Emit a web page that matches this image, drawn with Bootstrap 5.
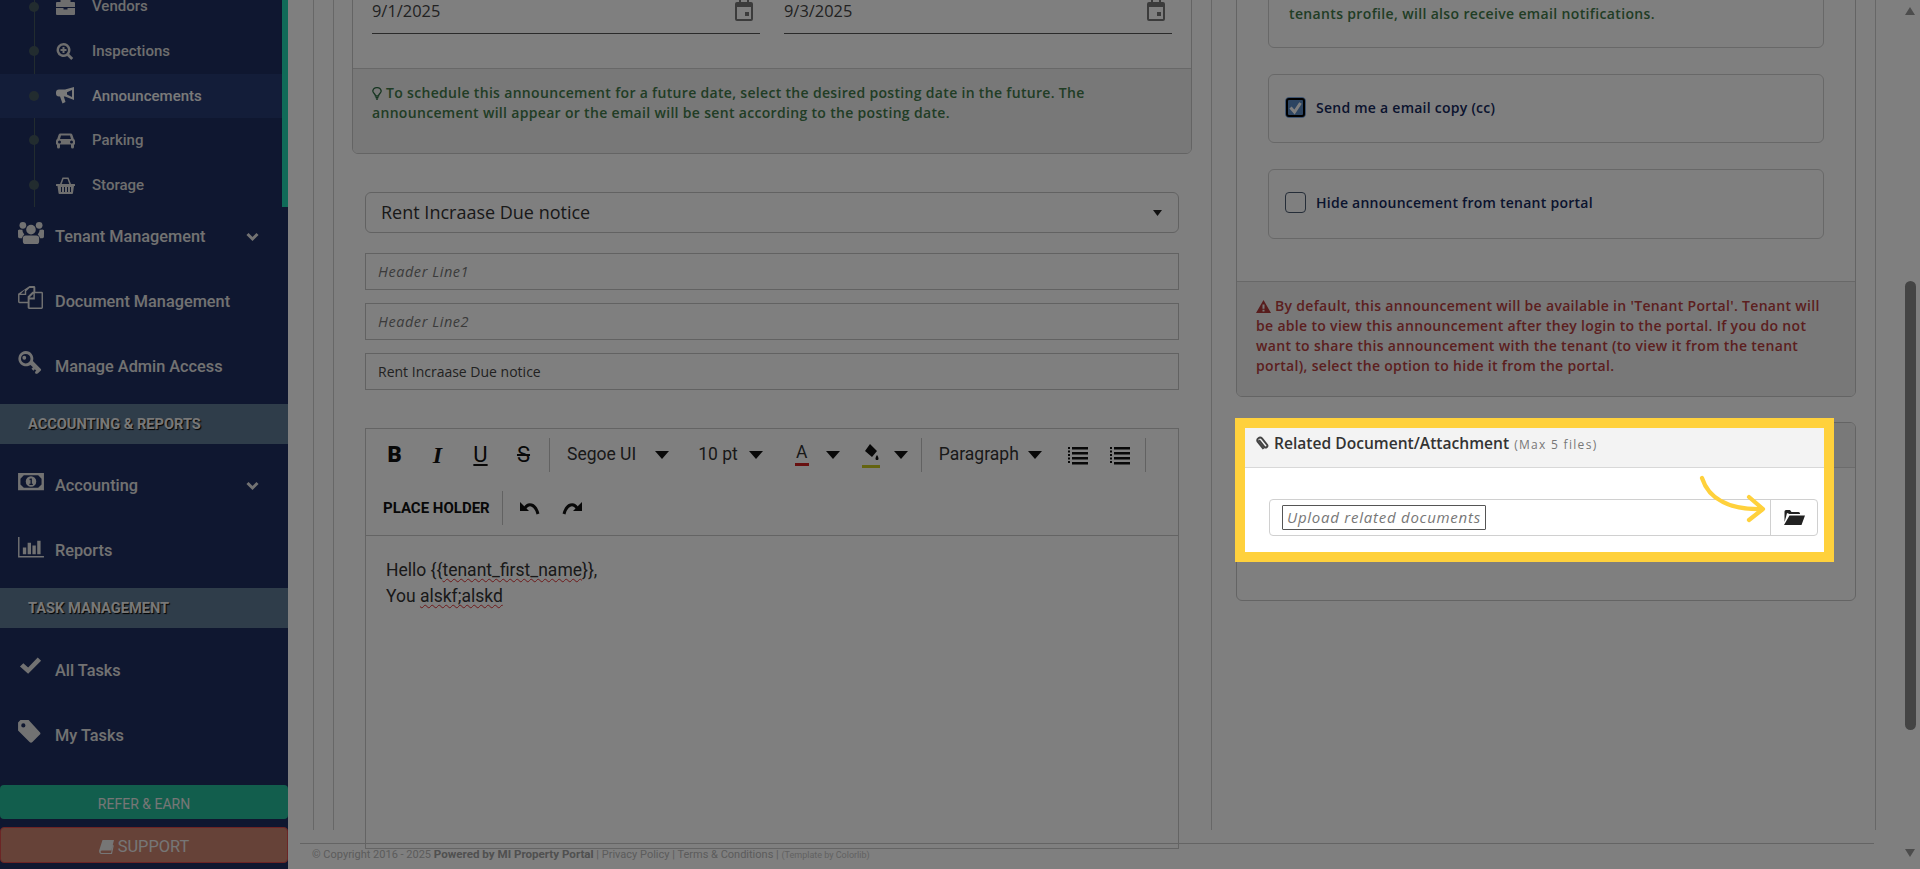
<!DOCTYPE html>
<html lang="en">
<head>
<meta charset="utf-8">
<title>Announcement</title>
<link href="https://cdn.jsdelivr.net/npm/bootstrap@5.3.0/dist/css/bootstrap.min.css" rel="stylesheet">
<style>
html,body{height:100%;overflow:hidden;background:#fff}
body{font-family:"Open Sans","Noto Sans",sans-serif;color:#333}
.shell{height:869px}
/* sidebar */
.side{width:288px;flex:none;background:#1e2e60;font-family:Roboto,sans-serif;color:#e4e4e4;height:869px;overflow:hidden}
.sub{margin-top:-15.6px;border-right:6px solid #20d6b0;position:relative;height:223px}
.sub::before{content:"";position:absolute;left:34px;top:0;bottom:0;width:1px;background:#45585f}
.sub-i{height:44.6px;position:relative;font-size:15px;font-weight:500;color:#dcdcdc;padding-left:56px;gap:17px}
.sub-i::before{content:"";position:absolute;left:29px;top:50%;margin-top:-5px;width:10px;height:10px;border-radius:50%;background:#45585f}
.sub-i.on{background:#263a72;color:#f4f4f4}
.sub-i svg{width:19px;height:17px;flex:none;fill:currentColor}
.grp-a{margin-top:-3.5px;margin-bottom:5.5px}
.grp-b{margin-top:8.5px;margin-bottom:5.5px}
.grp-c{margin-top:9.5px;margin-bottom:17.5px}
.m-i{height:65px;font-size:16.3px;font-weight:500;padding:2px 0 0 18px;position:relative}
.m-i .ic{width:37px;flex:none;display:flex;margin-top:-10px}
.m-i .ic svg{fill:currentColor;height:23px;width:26px}
.m-i .chev{position:absolute;right:29px;top:50%;width:13px;height:13px;margin-top:-6px;fill:none;stroke:currentColor;stroke-width:3}
.sec{height:40px;background:#5f7a94;padding:2px 0 0 28px;font-size:14.6px;font-weight:700;color:#f0f0f0;text-shadow:1px 1px 1px #000}
.cta{height:34px;margin-bottom:8px;background:#24bc9a;border-radius:4px;color:#ececec;font-size:14px;padding-top:5px}
.cta.sup{height:36px;background:#cc8470;border:1px solid #d84a4a;font-size:16.4px;gap:4px;margin-bottom:0;padding-top:4px}
.cta svg{width:15px;height:14px;fill:currentColor}
/* main */
.mainc{min-width:0}
.panel{height:830px;margin-left:25px;margin-right:29px;border-left:1px solid #cfcfcf;border-right:1px solid #cfcfcf}
.lcol{margin-left:19px;width:879px;flex:none;border-left:1px solid #cfcfcf;border-right:1px solid #cfcfcf;padding:0 19px 0 18px}
.rcol{flex:1;padding:0 19px 0 24px;min-width:0}
.clip-l{margin-top:-60px;height:214px;border-color:#c8c8c8}
.clip-l .card-body{height:128px;padding:72px 19px 0}
.cf{background:#f0f0f0;height:86px;padding:14px 19px;border-color:#d0d0d0}
.dt{flex:1;height:32px;position:relative;border-bottom:1px solid #555;font-size:16.4px;line-height:1;color:#444;padding-top:1px;margin-top:-3px}
.dt svg{position:absolute;right:7px;top:-2px;width:18px;height:21px;fill:#777}
.dates{gap:24px;height:32px;margin-top:-8px}
.note{font-size:14px;line-height:20px;font-weight:600;margin:0;letter-spacing:.32px}
.ok{color:#427a4a}
.bad{color:#b83e3e}
.note svg{width:10px;height:13px;vertical-align:-2px}
.sel{margin:38px 0 0 13px;width:814px;height:41px;font-size:18px;padding:0 15px;border-color:#c4c4c4;color:#333;background-size:9px 6px;background-position:right 16px center;background-image:url("data:image/svg+xml,%3Csvg xmlns='http://www.w3.org/2000/svg' viewBox='0 0 9 6'%3E%3Cpath fill='%23222' d='M0 0h9L4.500 6z'/%3E%3C/svg%3E")}
.tx{display:block;margin:13px 0 0 13px;width:814px;height:37px;border-radius:0;border-color:#c4c4c4;padding:0 12px;font-size:14px;color:#444}
.sel+.tx{margin-top:20px}
.tx::placeholder{font-style:italic;color:#777;font-size:14.5px;letter-spacing:.55px}
.ed{margin:38px 0 0 13px;width:814px;height:421px;border:1px solid #c8c8c8;background:transparent;position:relative;z-index:2;font-family:Roboto,sans-serif}
.tb{height:107px;border-bottom:1px solid #c8c8c8;padding:0 0 0 7px}
.tr{height:52px}
.tr+.tr{height:54px}
.tr>*{flex:none}
.sq{width:43px;text-align:center;font-size:22px;color:#111;line-height:1}
.sq.bb{font-weight:900}
.sq.ii{font-family:"Liberation Serif",serif;font-weight:700;font-style:italic;font-size:24px}
.sep{width:1px;height:34px;background:#c4c4c4}
.sep.s1{margin-left:4px}.sep.s2{margin-left:13px}.sep.s3{margin-left:14px}.sep.s4{margin-left:12px}
.car{width:0;height:0;border-left:7px solid transparent;border-right:7px solid transparent;border-top:8px solid #111;display:inline-block}
.lb{font-size:17.5px;color:#333;line-height:1}
.l1{margin-left:17px}.c1{margin-left:19px}.l2{margin-left:29px}.c2{margin-left:11px}
.aa{margin-left:32px;width:14px;text-align:center;border-bottom:3px solid #d02020;padding-bottom:1px}
.c3{margin-left:17px}.bk{margin-left:22px}.c4{margin-left:14px}
.l3{margin-left:17px}.c5{margin-left:9px}.li1{margin-left:25px}.li2{margin-left:20px}
.tbic{width:22px;height:20px}
.lst{fill:#111}
.hold{font-size:15px;font-weight:700;color:#111;margin-left:10px;white-space:nowrap}
.un{margin-left:16px;fill:none;stroke:#111;stroke-width:3}
.re{margin-left:20px;fill:none;stroke:#111;stroke-width:3}
.un path+path,.re path+path{fill:#111;stroke:none}
.ebody{padding:21px 20px;font-size:17.5px;line-height:26px;color:#333}
.sp{text-decoration:underline wavy #d33 1px;text-underline-offset:2px;text-decoration-skip-ink:none}
.footl{border-top:1px solid #c8c8c8;margin:13px 31px 0 12px;padding:2px 0 0 12px;font-family:Roboto,sans-serif;font-size:11px;color:#b8b8b8;white-space:nowrap}
.footl b{color:#a0a0a0;font-size:11.6px}
.footl small{font-size:9px;color:#c4c4c4}
.cout{margin-top:-60px;height:457px;border-color:#c8c8c8}
.cout .card-body{padding:0 31px}
.inner{border-color:#d0d0d0;margin-bottom:26px;padding:0 16px}
.i1{height:107px;padding:62px 20px 0;font-size:14px;line-height:20px;font-weight:600;letter-spacing:.35px}
.i2{height:69px;padding-bottom:3px}
.i3{height:70px;margin-bottom:0;padding-bottom:3px}
.ck{width:21px;height:21px;flex:none;border:1px solid #4a5a70;border-radius:4px;background:#fff}
.ck.on{background:#5a8ac4;border-color:#7fa8e0;outline:2px solid #000;outline-offset:-3px}
.ck svg{display:block;width:19px;height:19px;fill:none;stroke:#fff;stroke-width:3}
.cl{font-size:14px;font-weight:600;color:#14285c;margin-left:10px;letter-spacing:.25px}
.cout .cf{height:115px;padding:14px 30px 14px 19px}
.ch{height:45px;background:#f3f3f3;border-color:#d8d8d8;padding:0 15px 3px 19px;display:flex;align-items:center;font-weight:600;color:#333;font-size:15.6px}
.ch svg{width:13px;height:15px;margin-right:5px;fill:none;stroke:#444;stroke-width:2}
.ch small{font-weight:400;font-size:12px;color:#777;margin-left:5px;letter-spacing:1.3px;padding-top:2px}
.cb{margin-top:25px;height:179px;border-color:#c8c8c8}
.cb .card-body{padding:31px 37px 0 32px}
.ig{height:37px;border:1px solid #d0d0d0;border-radius:4px}
.upl{flex:1;padding-left:12px}
.upbtn{border:1px solid #555;border-radius:1px;height:25px;padding:0 4px;font-size:15px;font-style:italic;color:#777;letter-spacing:.75px;line-height:23px}
.fold{width:47px;border-left:1px solid #d0d0d0}
.fold svg{width:21px;height:15px;fill:#222}
.bar{width:15px;flex:none;padding-right:4px}
.up{width:0;height:0;border-left:5.500px solid transparent;border-right:5.500px solid transparent;border-bottom:8px solid #999;margin-top:7px}
.dn{width:0;height:0;border-left:5.500px solid transparent;border-right:5.500px solid transparent;border-top:8px solid #999;margin-top:119px}
.thumb{height:449px;margin-top:266px;background:#888;border-radius:6px}
/* highlight */
.hole{position:fixed;left:1235px;top:418px;width:599px;height:144px;border:10px solid #ffd13c;box-shadow:0 0 0 3000px rgba(0,0,0,.5);z-index:10}
.arrow{position:fixed;left:1695px;top:470px;width:76px;height:60px;z-index:11;fill:none;stroke:#ffd13c;stroke-width:4.200;stroke-linecap:round;stroke-linejoin:round}
</style>
</head>
<body>
<svg width="0" height="0" class="position-absolute">
<defs>
<symbol id="i-brief" viewBox="0 0 19 17"><path d="M6 2h7v2H6zM4.500 4V1.500A1.500 1.500 0 0 1 6 0h7a1.500 1.500 0 0 1 1.500 1.500V4H18a1 1 0 0 1 1 1v4H0V5a1 1 0 0 1 1-1zM0 10h7.500v1.500h4V10H19v6a1 1 0 0 1-1 1H1a1 1 0 0 1-1-1z"/></symbol>
<symbol id="i-search" viewBox="0 0 19 17"><path fill-rule="evenodd" d="M7.500 0a7 7 0 0 1 5.700 11l4 4-2 2-4-4A7 7 0 1 1 7.500 0zm0 2.500a4.500 4.500 0 1 0 0 9 4.500 4.500 0 0 0 0-9zM6.500 4h2v2h2v2h-2v2h-2V8h-2V6h2z"/></symbol>
<symbol id="i-horn" viewBox="0 0 19 17"><path fill-rule="evenodd" d="M18 0v13L9 9.500H7.800L9.500 15l-3 1.500L4 9.500H3A3 3 0 0 1 0 6.500v-1A3 3 0 0 1 3 2.500h6zM16 3 11 5.200v2.400L16 10z"/></symbol>
<symbol id="i-car" viewBox="0 0 19 17"><path fill-rule="evenodd" d="M4.500 1.500h10a2 2 0 0 1 1.900 1.300L17.800 7A2.500 2.500 0 0 1 19 9v3.500h-1V15a1.500 1.500 0 0 1-3 0v-2.500H4V15a1.500 1.500 0 0 1-3 0v-2.500H0V9a2.500 2.500 0 0 1 1.200-2l1.400-4.200a2 2 0 0 1 1.900-1.300zM5 3.500 4 7h11l-1-3.500zM3.500 8.500a1.500 1.500 0 1 0 0 3 1.500 1.500 0 0 0 0-3zm12 0a1.500 1.500 0 1 0 0 3 1.500 1.500 0 0 0 0-3z"/></symbol>
<symbol id="i-basket" viewBox="0 0 19 17"><path fill-rule="evenodd" d="M4 7 6.500.5h6L15 7h3.500a.5.500 0 0 1 .5.500V9h-1l-1 7a1 1 0 0 1-1 1H3.500a1 1 0 0 1-1-1l-1-7H0V7.500A.5.500 0 0 1 .5 7zm1.700 0h7.600L11.500 2h-4zM5 10v5h1v-5zm3 0v5h1v-5zm3 0v5h1v-5zm3 0v5h1v-5z"/></symbol>
<symbol id="i-users" viewBox="0 0 27 24"><circle cx="5" cy="4.500" r="3.500"/><circle cx="22" cy="4.500" r="3.500"/><circle cx="13.500" cy="9" r="5"/><path d="M0 14a3 3 0 0 1 3-5h1.500a7 7 0 0 0 2 5A8 8 0 0 0 4 18H1.500A1.500 1.500 0 0 1 0 16.500zM27 14a3 3 0 0 0-3-5h-1.500a7 7 0 0 1-2 5 8 8 0 0 1 2.500 4h2.500a1.500 1.500 0 0 0 1.500-1.500zM8 15h11a3 3 0 0 1 3 3v3a3 3 0 0 1-3 3H8a3 3 0 0 1-3-3v-3a3 3 0 0 1 3-3z"/></symbol>
<symbol id="i-files" viewBox="0 0 27 24"><path fill-rule="evenodd" d="M12 0h4.500A1.500 1.500 0 0 1 18 1.500V6h6.500A1.500 1.500 0 0 1 26 7.500v15a1.500 1.500 0 0 1-1.500 1.500h-13a1.500 1.500 0 0 1-1.500-1.500V18H1.500A1.500 1.500 0 0 1 0 16.500V8zM7 4 3 8h4zm5-2L8.500 5.500V9.500H1.500v7H10V11l5-5h1V2zM16 8l-4 4h4zm-4 6v8.500h12.500V7.500H17.500v6.500z"/></symbol>
<symbol id="i-key" viewBox="0 0 27 24"><path fill-rule="evenodd" d="M8 0a8 8 0 0 1 7.500 10.500L24 19v1l-1 1-2.500 2.500-2 .5-1-2 1.500-1.500-1.500-1.500-1.500 1.500-2-2 1.500-1.500-2.500-2.500A8 8 0 1 1 8 0zm0 3a5 5 0 1 0 0 10A5 5 0 0 0 8 3zM6.500 5a2 2 0 1 1 0 4 2 2 0 0 1 0-4z"/></symbol>
<symbol id="i-money" viewBox="0 0 27 24"><path fill-rule="evenodd" d="M0 3h27v18H0zM6 5.500 2.500 9v6L6 18.500h15l3.500-3.500V9L21 5.500zM13.500 6.500a5.500 5.500 0 1 1 0 11 5.500 5.500 0 0 1 0-11zM12 9.200v1.400l1-.3v4h-1.200v1.300h3.600v-1.300h-1V8.800h-1z"/></symbol>
<symbol id="i-chart" viewBox="0 0 27 24"><path d="M0 2h1.500v20H27v1.500H0zM5 13h3.500v7H5zM10 8h3.500v12H10zM15 11h3.500v9H15zM20 6h3.500v14H20z"/></symbol>
<symbol id="i-check" viewBox="0 0 27 24"><path d="M2 12l3.500-3.500L10.500 13l10-10.500L24 6 10.500 19.500z"/></symbol>
<symbol id="i-tag" viewBox="0 0 27 24"><path fill-rule="evenodd" d="M0 2.500 2.500 0H11l11.500 12.500a2 2 0 0 1 0 3L15 23a2 2 0 0 1-3 0L0 11zM5.500 3.500a2.200 2.200 0 1 0 0 4.400 2.200 2.200 0 0 0 0-4.400z"/></symbol>
<symbol id="i-book" viewBox="0 0 15 14"><path d="M3.500 0H15l-2.600 10.500H2.700A1.300 1.300 0 0 0 2.500 13H12l1.800-8 1 .5L13 14H2.500C.6 14-.4 11.800.3 10z"/></symbol>
<symbol id="i-cal" viewBox="0 0 18 21"><path fill-rule="evenodd" d="M4 0h2v2h6V0h2v2h2a2 2 0 0 1 2 2v15a2 2 0 0 1-2 2H2a2 2 0 0 1-2-2V4a2 2 0 0 1 2-2h2zM2 7v12h14V7zm8 5h4v4h-4z"/></symbol>
<symbol id="i-bulb" viewBox="0 0 10 13"><path fill="none" stroke="#2b6a40" stroke-width="1.300" d="M3.500 9c0-2-2.700-3-2.700-5A4.100 4.100 0 0 1 5 .7 4.100 4.100 0 0 1 9.200 4c0 2-2.700 3-2.700 5z"/><path fill="#2b6a40" d="M3.500 10h3v1.200h-3zM4 11.600h2v1.200H4z"/></symbol>
<symbol id="i-warn" viewBox="0 0 15 13"><path fill="#b03a3a" fill-rule="evenodd" d="M7.500 0 15 13H0zM6.500 4.500v4.300h2V4.500zm0 5.200v1.800h2V9.700z"/></symbol>
<symbol id="i-folder" viewBox="0 0 21 15"><path d="M3 3 2 7 .5 12V1.500A1.500 1.500 0 0 1 2 0h4l1.500 2h7A1.500 1.500 0 0 1 16 3.500V4H5.500zM5.500 5.500H21L17.500 15H0z"/></symbol>
<symbol id="i-list" viewBox="0 0 22 20"><path d="M5 2h16v2.500H5zM5 7h16v2.500H5zM5 12h16v2.500H5zM5 17h16v2.500H5zM1 2h2v2H1zM1 5.500h2v2H1zM1 9h2v2H1zM1 12.500h2v2H1zM1 16h2v2H1z"/></symbol>
</defs>
</svg>

<div class="shell d-flex">
  <aside class="side d-flex flex-column">
    <div class="sub">
      <div class="sub-i d-flex align-items-center"><svg><use href="#i-brief"/></svg>Vendors</div>
      <div class="sub-i d-flex align-items-center"><svg><use href="#i-search"/></svg>Inspections</div>
      <div class="sub-i on d-flex align-items-center"><svg><use href="#i-horn"/></svg>Announcements</div>
      <div class="sub-i d-flex align-items-center"><svg><use href="#i-car"/></svg>Parking</div>
      <div class="sub-i d-flex align-items-center"><svg><use href="#i-basket"/></svg>Storage</div>
    </div>
    <div class="grp-a">
      <div class="m-i d-flex align-items-center"><span class="ic"><svg><use href="#i-users"/></svg></span>Tenant Management<svg class="chev" viewBox="0 0 13 13"><path d="M1.500 4 6.500 9l5-5"/></svg></div>
      <div class="m-i d-flex align-items-center"><span class="ic"><svg><use href="#i-files"/></svg></span>Document Management</div>
      <div class="m-i d-flex align-items-center"><span class="ic"><svg><use href="#i-key"/></svg></span>Manage Admin Access</div>
    </div>
    <div class="sec d-flex align-items-center">ACCOUNTING &amp; REPORTS</div>
    <div class="grp-b">
      <div class="m-i d-flex align-items-center"><span class="ic"><svg><use href="#i-money"/></svg></span>Accounting<svg class="chev" viewBox="0 0 13 13"><path d="M1.500 4 6.500 9l5-5"/></svg></div>
      <div class="m-i d-flex align-items-center"><span class="ic"><svg><use href="#i-chart"/></svg></span>Reports</div>
    </div>
    <div class="sec d-flex align-items-center">TASK MANAGEMENT</div>
    <div class="grp-c">
      <div class="m-i d-flex align-items-center"><span class="ic"><svg><use href="#i-check"/></svg></span>All Tasks</div>
      <div class="m-i d-flex align-items-center"><span class="ic"><svg><use href="#i-tag"/></svg></span>My Tasks</div>
    </div>
    <div class="cta d-flex align-items-center justify-content-center">REFER &amp; EARN</div>
    <div class="cta sup d-flex align-items-center justify-content-center"><svg><use href="#i-book"/></svg>SUPPORT</div>
  </aside>

  <main class="mainc flex-grow-1 d-flex flex-column">
    <div class="panel d-flex flex-none">
      <section class="lcol">
        <div class="card clip-l">
          <div class="card-body">
            <div class="dates d-flex">
              <div class="dt">9/1/2025<svg><use href="#i-cal"/></svg></div>
              <div class="dt">9/3/2025<svg><use href="#i-cal"/></svg></div>
            </div>
          </div>
          <div class="card-footer cf"><p class="note ok"><svg><use href="#i-bulb"/></svg> To schedule this announcement for a future date, select the desired posting date in the future. The announcement will appear or the email will be sent according to the posting date.</p></div>
        </div>
        <select class="form-select sel"><option>Rent Incraase Due notice</option></select>
        <input class="form-control tx" placeholder="Header Line1">
        <input class="form-control tx" placeholder="Header Line2">
        <input class="form-control tx" value="Rent Incraase Due notice">
        <div class="ed">
          <div class="tb">
            <div class="tr d-flex align-items-center">
              <span class="sq bb">B</span><span class="sq ii">I</span><span class="sq text-decoration-underline">U</span><span class="sq text-decoration-line-through">S</span>
              <span class="sep s1"></span>
              <span class="lb l1">Segoe UI</span><span class="car c1"></span>
              <span class="lb l2">10 pt</span><span class="car c2"></span>
              <span class="lb aa">A</span><span class="car c3"></span>
              <svg class="bk" width="18" height="26" viewBox="0 0 18 26"><path fill="#111" d="M8 2l7 7-5 6-7-6zM15 13c2 3 2 5 0 5s-2-2 0-5z"/><rect y="23" width="18" height="3" fill="#c8c820"/></svg><span class="car c4"></span>
              <span class="sep s2"></span>
              <span class="lb l3">Paragraph</span><span class="car c5"></span>
              <svg class="tbic lst li1"><use href="#i-list"/></svg>
              <svg class="tbic lst li2"><use href="#i-list"/></svg>
              <span class="sep s3"></span>
            </div>
            <div class="tr d-flex align-items-center">
              <span class="hold">PLACE HOLDER</span>
              <span class="sep s4"></span>
              <svg class="tbic un" viewBox="0 0 22 20"><path d="M6 10C9 5 16 5 19 16"/><path d="M1 4v9h9z"/></svg>
              <svg class="tbic re" viewBox="0 0 22 20"><path d="M16 10C13 5 6 5 3 16"/><path d="M21 4v9h-9z"/></svg>
            </div>
          </div>
          <div class="ebody">Hello {{<span class="sp">tenant_first_name</span>}},<br>You <span class="sp">alskf;alskd</span></div>
        </div>
      </section>
      <section class="rcol">
        <div class="card cout">
          <div class="card-body">
            <div class="card inner i1 ok">tenants profile, will also receive email notifications.</div>
            <div class="card inner i2 flex-row align-items-center"><span class="ck on"><svg viewBox="0 0 18 19"><path d="M4 9.500 8 14l6-9"/></svg></span><span class="cl">Send me a email copy (cc)</span></div>
            <div class="card inner i3 flex-row align-items-center"><span class="ck"></span><span class="cl">Hide announcement from tenant portal</span></div>
          </div>
          <div class="card-footer cf"><p class="note bad"><svg class="w-auto" width="15" height="13"><use href="#i-warn"/></svg> By default, this announcement will be available in 'Tenant Portal'. Tenant will be able to view this announcement after they login to the portal. If you do not want to share this announcement with the tenant (to view it from the tenant portal), select the option to hide it from the portal.</p></div>
        </div>
        <div class="card cb">
          <div class="card-header ch"><svg viewBox="0 0 13 15"><path d="M3 4 8.500 11a1.700 1.700 0 0 0 2.700-2L6 2.500a2.700 2.700 0 0 0-4.300 3.200L7.500 13"/></svg>Related Document/Attachment<small>(Max 5 files)</small></div>
          <div class="card-body">
            <div class="ig d-flex">
              <div class="upl d-flex align-items-center"><span class="upbtn">Upload related documents</span></div>
              <div class="fold d-flex align-items-center justify-content-center"><svg><use href="#i-folder"/></svg></div>
            </div>
          </div>
        </div>
      </section>
    </div>
    <footer class="footl">© Copyright 2016 - 2025 <b>Powered by MI Property Portal</b> | Privacy Policy | Terms &amp; Conditions | <small>(Template by Colorlib)</small></footer>
  </main>
  <div class="bar"><div class="up"></div><div class="thumb"></div><div class="dn"></div></div>
</div>

<div class="hole"></div>
<svg class="arrow" viewBox="0 0 76 60"><path d="M7 8C14 30 36 40 68 39M54 27 68 39 54 50"/></svg>
<script src="https://cdn.jsdelivr.net/npm/bootstrap@5.3.0/dist/js/bootstrap.bundle.min.js"></script>
</body>
</html>
